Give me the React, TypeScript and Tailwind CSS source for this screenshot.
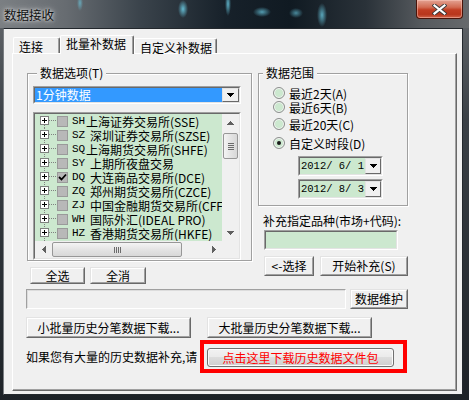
import React from 'react';

const font = "font-['Noto_Sans_CJK_SC','Noto_Sans',sans-serif]";
const mono = "font-['Liberation_Mono','Noto_Sans_CJK_SC',monospace]";

// classic win32 3D edges
function Btn({ className = '', children, text = 'text-black' }: { className?: string; children: React.ReactNode; text?: string }) {
  return (
    <button className={`block border border-t-[#e3e3e3] border-l-[#e3e3e3] border-r-[#696969] border-b-[#696969] bg-[#f0f0f0] p-0 ${className}`}>
      <span className={`flex h-full w-full items-center justify-center whitespace-nowrap border border-t-white border-l-white border-r-[#a0a0a0] border-b-[#a0a0a0] text-[12px] leading-none ${text}`}>
        {children}
      </span>
    </button>
  );
}

function Sunken({ className = '', inner = '', children }: { className?: string; inner?: string; children?: React.ReactNode }) {
  return (
    <div className={`border border-t-[#a0a0a0] border-l-[#a0a0a0] border-r-white border-b-white ${className}`}>
      <div className={`h-full w-full border border-t-[#696969] border-l-[#696969] border-r-[#e3e3e3] border-b-[#e3e3e3] ${inner}`}>{children}</div>
    </div>
  );
}

function Tri({ dir = 'down', color = '#000' }: { dir?: 'down' | 'up' | 'left' | 'right'; color?: string }) {
  if (dir === 'down')
    return (
      <svg width="7" height="4" viewBox="0 0 7 4">
        <path d="M0 0h7v1h-1v1h-1v1h-1v1h-1v-1h-1v-1h-1v-1h-1z" fill={color} />
      </svg>
    );
  if (dir === 'up')
    return (
      <svg width="7" height="4" viewBox="0 0 7 4">
        <path d="M3 0h1v1h1v1h1v1h1v1h-7v-1h1v-1h1v-1h1z" fill={color} />
      </svg>
    );
  if (dir === 'left')
    return (
      <svg width="4" height="7" viewBox="0 0 4 7">
        <path d="M3 0h1v7h-1v-1h-1v-1h-1v-1h-1v-1h1v-1h1v-1h1z" fill={color} />
      </svg>
    );
  return (
    <svg width="4" height="7" viewBox="0 0 4 7">
      <path d="M0 0h1v1h1v1h1v1h1v1h-1v1h-1v1h-1v1h-1z" fill={color} />
    </svg>
  );
}

function DropBtn({ className = '' }: { className?: string }) {
  return (
    <div className={`flex shrink-0 items-center justify-center border border-t-[#e3e3e3] border-l-[#e3e3e3] border-r-[#696969] border-b-[#696969] bg-[#f0f0f0] ${className}`}>
      <Tri />
    </div>
  );
}

function Group({ label, className = '', children }: { label: string; className?: string; children: React.ReactNode }) {
  return (
    <div className={`border border-[#a0a0a0] shadow-[inset_1px_1px_0_#fff,1px_1px_0_#fff] ${className}`}>
      <div className="-mt-[8px] ml-[4px] w-fit bg-[#f0f0f0] px-[3px] text-[12px] leading-[14px] text-black">{label}</div>
      {children}
    </div>
  );
}

function Radio({ label, checked = false, className = '' }: { label: string; checked?: boolean; className?: string }) {
  return (
    <div className={`flex h-[14px] items-center ${className}`}>
      <span className="flex h-[12px] w-[12px] items-center justify-center rounded-full border border-[#8e8f8f] bg-[#cce8cf] shadow-[inset_0_0_0_1px_#f4f4f4]">
        {checked && <span className="h-[4px] w-[4px] rounded-full bg-[#1a1a1a]" />}
      </span>
      <span className="ml-[4px] text-[12px] leading-[13px] text-black">{label}</span>
    </div>
  );
}

function DateBox({ value, className = '' }: { value: string; className?: string }) {
  return (
    <Sunken className={`h-[20px] w-[85px] ${className}`} inner="flex bg-[#cce8cf]">
      <span className={`${mono} flex-1 overflow-hidden whitespace-pre pl-[1px] text-[10.5px] leading-[16px] text-black`}>{value}</span>
      <DropBtn className="h-[16px] w-[16px]" />
    </Sunken>
  );
}

const rows: { code: string; wide: boolean; name: string; checked?: boolean }[] = [
  { code: 'SH', wide: false, name: '上海证券交易所(SSE)' },
  { code: 'SZ', wide: true, name: '深圳证券交易所(SZSE)' },
  { code: 'SQ', wide: false, name: '上海期货交易所(SHFE)' },
  { code: 'SY', wide: true, name: '上期所夜盘交易' },
  { code: 'DQ', wide: true, name: '大连商品交易所(DCE)', checked: true },
  { code: 'ZQ', wide: true, name: '郑州期货交易所(CZCE)' },
  { code: 'ZJ', wide: true, name: '中国金融期货交易所(CFFEX)' },
  { code: 'WH', wide: true, name: '国际外汇(IDEAL PRO)' },
  { code: 'HZ', wide: true, name: '香港期货交易所(HKFE)' },
  { code: 'SG', wide: true, name: '上海黄金交易所(SGE)' },
];

function TreeRow({ code, wide, name, checked, first }: { code: string; wide: boolean; name: string; checked?: boolean; first: boolean }) {
  return (
    <div className="flex h-[14px] shrink-0 items-center whitespace-nowrap">
      <svg width="17" height="14" viewBox="0 0 17 14" className="ml-[5px] shrink-0">
        <line x1="4.5" y1={first ? 7 : 0} x2="4.5" y2="14" stroke="#808080" strokeDasharray="1 1" />
        <line x1="9" y1="6.5" x2="17" y2="6.5" stroke="#808080" strokeDasharray="1 1" />
        <rect x="0.5" y="2.5" width="8" height="8" fill="#fff" stroke="#7f7f7f" />
        <path d="M2 6.5h5M4.5 4v5" stroke="#000" />
      </svg>
      <span className="flex h-[11px] w-[11px] shrink-0 items-center justify-center border border-[#9a9a9a] bg-[#b8b8b8]">
        {checked && (
          <svg width="9" height="9" viewBox="0 0 9 9">
            <path d="M1 4l2.5 2.5L8 1.5" stroke="#000" strokeWidth="1.8" fill="none" />
          </svg>
        )}
      </span>
      <span className={`${mono} ml-[4px] inline-block shrink-0 text-[11px] leading-[13px] text-black ${wide ? 'w-[18px]' : 'w-[14px]'}`}>{code}</span>
      <span className="text-[12px] leading-[13px] text-black">{name}</span>
    </div>
  );
}

function MarketList() {
  return (
    <Sunken className="mt-[8px] h-[148px] w-[208px]" inner="flex flex-col bg-[#cce8cf]">
      <div className="flex h-[127px]">
        <div className="flex flex-1 flex-col overflow-hidden">
          {rows.map((r, i) => (
            <TreeRow key={r.code} {...r} first={i === 0} />
          ))}
        </div>
        <div className="flex w-[17px] flex-col bg-[#f0f0f0]">
          <div className="flex h-[17px] items-center justify-center">
            <Tri dir="up" color="#606060" />
          </div>
          <div className="mx-[1px] mt-[2px] flex h-[26px] flex-col items-center justify-center gap-[1px] rounded-[2px] border border-[#979797] bg-[linear-gradient(90deg,#f4f4f4,#e4e4e4_50%,#d8d8d8)]">
            <span className="h-[1px] w-[6px] bg-[#6b6b6b]" />
            <span className="h-[1px] w-[6px] bg-[#6b6b6b]" />
            <span className="h-[1px] w-[6px] bg-[#6b6b6b]" />
            <span className="h-[1px] w-[6px] bg-[#6b6b6b]" />
          </div>
          <div className="flex-1" />
          <div className="flex h-[17px] items-center justify-center">
            <Tri dir="down" color="#606060" />
          </div>
        </div>
      </div>
      <div className="flex h-[17px]">
        <div className="flex flex-1 bg-[#f0f0f0]">
          <div className="flex w-[17px] items-center justify-center">
            <Tri dir="left" color="#606060" />
          </div>
          <div className="my-[1px] flex w-[130px] items-center justify-center gap-[1px] rounded-[2px] border border-[#979797] bg-[linear-gradient(180deg,#f4f4f4,#e4e4e4_50%,#d8d8d8)]">
            <span className="h-[6px] w-[1px] bg-[#6b6b6b]" />
            <span className="h-[6px] w-[1px] bg-[#6b6b6b]" />
            <span className="h-[6px] w-[1px] bg-[#6b6b6b]" />
            <span className="h-[6px] w-[1px] bg-[#6b6b6b]" />
          </div>
          <div className="flex-1" />
          <div className="flex w-[17px] items-center justify-center">
            <Tri dir="right" color="#606060" />
          </div>
        </div>
        <div className="w-[17px] bg-[#f0f0f0]" />
      </div>
    </Sunken>
  );
}

function Tab({ label, active = false, className = '' }: { label: string; active?: boolean; className?: string }) {
  return (
    <div
      className={`rounded-t-[2px] border-l border-t border-r border-l-white border-t-white border-r-[#696969] bg-[#f0f0f0] pl-[5px] text-[12px] leading-[14px] text-black shadow-[inset_-1px_0_0_#a0a0a0] ${
        active ? 'relative z-10 -mb-[1px] pt-[1px]' : 'pt-[2px]'
      } ${className}`}
    >
      {label}
    </div>
  );
}

export default function App() {
  return (
    <div className={`${font} flex h-[400px] w-[469px] flex-col bg-[linear-gradient(180deg,#65696d_0%,#3b4147_30%,#1d2227_100%)]`}>
      {/* title bar over glass */}
      <div className="flex h-[28px] items-start justify-between bg-[radial-gradient(ellipse_5px_9px_at_183px_9px,rgba(110,210,235,0.85),transparent),radial-gradient(ellipse_3px_12px_at_228px_4px,rgba(110,210,235,0.8),transparent),radial-gradient(ellipse_9px_5px_at_262px_12px,rgba(110,210,235,0.7),transparent),radial-gradient(ellipse_7px_5px_at_296px_13px,rgba(110,210,235,0.6),transparent),radial-gradient(ellipse_5px_12px_at_322px_15px,rgba(110,210,235,0.75),transparent),radial-gradient(ellipse_3px_8px_at_80px_3px,rgba(110,210,235,0.6),transparent),linear-gradient(90deg,#7b7f83_0%,#676c71_14%,#3a434b_30%,#17212a_48%,#101a22_62%,#2a3239_78%,#565a5e_90%,#66696c_100%)]">
        <span className="ml-[4px] mt-[8px] text-[12.5px] leading-[14px] text-[#111] [text-shadow:0_0_6px_rgba(235,235,235,0.9),0_0_3px_rgba(235,235,235,0.9)]">数据接收</span>
        <div className="mr-[6px] flex h-[19px] w-[47px] items-center justify-center rounded-b-[4px] border border-t-0 border-[#4a1409] bg-[linear-gradient(180deg,#e4a393_0%,#d26b52_40%,#c13d22_55%,#b8361c_80%,#d0644a_100%)] shadow-[inset_0_0_0_1px_rgba(255,210,200,0.45)]">
          <svg width="15" height="11" viewBox="0 0 15 11">
            <path d="M2.5 1.5l10 8M12.5 1.5l-10 8" stroke="#3a3a3a" strokeWidth="4" strokeLinecap="square" />
            <path d="M2.5 1.5l10 8M12.5 1.5l-10 8" stroke="#fff" strokeWidth="2.2" strokeLinecap="square" />
          </svg>
        </div>
      </div>

      {/* client area */}
      <div className="ml-[3px] h-[367px] w-[460px] border border-[#23282d] border-l-[#7a7e82] bg-[#f0f0f0]">
        <div className="flex h-[24px] items-end pl-[9px]">
          <Tab label="连接" className="h-[16px] w-[47px]" />
          <Tab label="批量补数据" active className="h-[19px] w-[74px]" />
          <Tab label="自定义补数据" className="h-[15px] w-[83px]" />
        </div>

        <div className="ml-[8px] h-[338px] w-[445px] border border-t-white border-l-white border-r-[#696969] border-b-[#696969] pl-[13px] pt-[19px] shadow-[inset_-1px_-1px_0_#a0a0a0]">
          <div className="flex items-start">
            {/* left column */}
            <div className="ml-[1px] w-[225px]">
              <Group label="数据选项(T)" className="h-[188px] px-[5px]">
                <Sunken className="mt-[6px] h-[18px] w-[208px]" inner="flex bg-white">
                  <span className="flex-1 bg-[#3399ff] pl-[1px] text-[12px] leading-[14px] text-white">1分钟数据</span>
                  <DropBtn className="h-[14px] w-[17px]" />
                </Sunken>
                <MarketList />
              </Group>
              <div className="mt-[6px] flex gap-[5px] pl-[3px]">
                <Btn className="h-[17px] w-[55px]">全选</Btn>
                <Btn className="h-[17px] w-[56px]">全消</Btn>
              </div>
            </div>

            {/* right column */}
            <div className="ml-[6px] w-[150px]">
              <Group label="数据范围" className="h-[133px] pb-[6px]">
                <div className="pl-[14px]">
                  <Radio label="最近2天(A)" className="mt-[6px]" />
                  <Radio label="最近6天(B)" />
                  <Radio label="最近20天(C)" className="mt-[3px]" />
                  <Radio label="自定义时段(D)" checked className="mt-[5px]" />
                </div>
                <div className="pl-[39px]">
                  <DateBox value="2012/ 6/ 1" className="mt-[6px]" />
                  <DateBox value="2012/ 8/ 3" className="mt-[3px]" />
                </div>
              </Group>
              <div className="ml-[5px] mt-[8px] whitespace-nowrap text-[12px] leading-[14px] text-black">补充指定品种(市场+代码):</div>
              <Sunken className="ml-[6px] mt-[2px] h-[20px] w-[134px]" inner="bg-[#cce8cf]" />
              <div className="ml-[6px] mt-[6px] flex gap-[6px]">
                <Btn className="h-[20px] w-[50px]">&lt;-选择</Btn>
                <Btn className="h-[20px] w-[88px]">开始补充(S)</Btn>
              </div>
            </div>
          </div>

          <div className="mt-[5px] flex gap-[4px]">
            <div className="h-[20px] w-[320px] border border-t-[#a0a0a0] border-l-[#a0a0a0] border-r-white border-b-white bg-[#f0f0f0] shadow-[inset_1px_1px_0_#dcdcdc]" />
            <Btn className="h-[20px] w-[58px]">数据维护</Btn>
          </div>

          <div className="mt-[8px] flex gap-[16px]">
            <Btn className="h-[21px] w-[165px]">小批量历史分笔数据下载...</Btn>
            <Btn className="h-[21px] w-[165px]">大批量历史分笔数据下载...</Btn>
          </div>

          <div className="mt-[2px] flex items-center">
            <span className="w-[174px] whitespace-nowrap text-[12px] leading-[14px] text-black">如果您有大量的历史数据补充,请</span>
            <div className="h-[33px] w-[207px] border-[4px] border-[#ff0000] pl-[3px] pt-[4px]">
              <button className="flex h-[19px] w-[187px] items-center justify-center rounded-[3px] border border-[#707070] bg-[linear-gradient(180deg,#f2f2f2_0%,#ebebeb_45%,#dddddd_50%,#cfcfcf_100%)] p-0 text-[12px] leading-none text-[#ff0000] shadow-[inset_0_0_0_1px_#fbfbfb]">
                点击这里下载历史数据文件包
              </button>
            </div>
          </div>
        </div>
      </div>
    </div>
  );
}
